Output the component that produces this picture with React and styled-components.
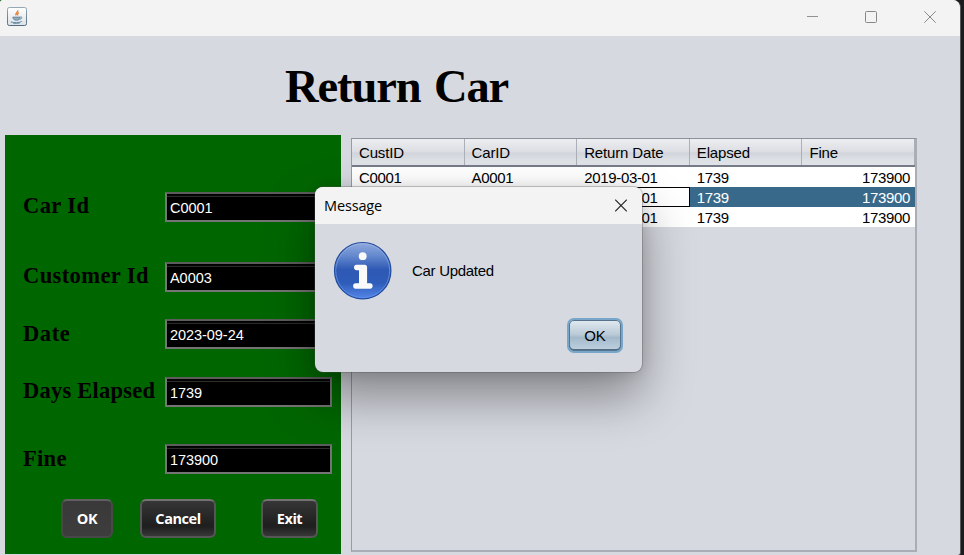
import React from "react";
import styled, { createGlobalStyle } from "styled-components";

const Global = createGlobalStyle`
  * { box-sizing: border-box; }
  body { margin: 0; background: #1b1c1d; overflow: hidden; }
`;

const Desktop = styled.div`
  position: relative;
  width: 964px;
  height: 555px;
  overflow: hidden;
  background: linear-gradient(90deg, #0b5a12 0 20px, #1a1b1c 20px);
  font: 15px/20px "Liberation Sans", Arial, sans-serif;
  color: #000;
`;

const Window = styled.div`
  width: 961px;
  height: 555px;
  display: flex;
  flex-direction: column;
  background: #d6d9e0;
  border-right: 1px solid #55585b;
  border-radius: 3px 8px 3px 0;
  overflow: hidden;
`;

const TitleBar = styled.header`
  flex: 0 0 36px;
  display: flex;
  align-items: center;
  justify-content: space-between;
  padding: 0 24px 3px 7px;
  background: #f3f3f3;
`;

const Controls = styled.div`
  display: flex;
  gap: 47px;
  svg { display: block; }
`;

const Heading = styled.h1`
  flex: 0 0 99px;
  margin: 0;
  padding: 23px 0 0 285px;
  font: bold 46.5px/55px "Liberation Serif", "Times New Roman", serif;
  letter-spacing: -1.1px;
  word-spacing: 3px;
  white-space: nowrap;
`;

const Content = styled.main`
  display: flex;
  align-items: flex-start;
  gap: 10px;
  padding-left: 5px;
`;

const FormPanel = styled.div`
  width: 336px;
  height: 419px;
  padding: 57px 9px 0 18px;
  background: #006600;
`;

const FieldRow = styled.div`
  display: grid;
  grid-template-columns: 142px 167px;
  height: 30px;
  margin-bottom: ${(p) => p.$gap}px;
`;

const Label = styled.label`
  font: bold 22.5px/${(p) => p.$line || 28}px "Liberation Serif", "Times New Roman", serif;
  letter-spacing: ${(p) => p.$spacing}px;
  white-space: nowrap;
`;

const Field = styled.div`
  height: 30px;
  padding: 4px 3px 0;
  color: #fff;
  font-size: 14.5px;
  line-height: 20px;
  letter-spacing: -0.05px;
  background: linear-gradient(#000 0 1px, #050505 1px 2px, #2b2b2b 2px 3px, #000 3px);
  border: 2px solid #747474;
  border-top-color: #5d5d5d;
  border-left-color: #777;
`;

const Actions = styled.div`
  display: flex;
  padding: 0 0 0 38px;
`;

const DarkButton = styled.button`
  width: ${(p) => p.$width}px;
  height: 39px;
  margin: 0 ${(p) => p.$after || 0}px 0 0;
  padding: 0;
  color: #fff;
  font: bold 14.5px/20px "Open Sans", "Noto Sans", sans-serif;
  letter-spacing: -0.45px;
  border: 2px solid ${(p) => (p.$pressed ? "#484848" : "#565656")};
  border-top-color: ${(p) => (p.$pressed ? "#606060" : "#737373")};
  border-radius: 6px;
  background: ${(p) =>
    p.$pressed
      ? "linear-gradient(#393939, #3d3d3d)"
      : "linear-gradient(#363636, #1f1f1f 68%, #202020 75%, #383838)"};
`;

const ScrollPane = styled.section`
  width: 566px;
  height: 414px;
  margin-top: 3px;
  border: 2px solid #a9adb5;
  border-width: 1px 2px 2px 1px;
  border-top-color: #8d919b;
  border-left-color: #989ca5;
`;

const Table = styled.div`
  width: 563px;
`;

const Row = styled.div`
  display: grid;
  grid-template-columns: repeat(5, 112.6px);
  height: 20px;
  background: #fff;
`;

const HeaderRow = styled(Row)`
  height: 28px;
  border-bottom: 2px solid #757c88;
  background: linear-gradient(#eceef1, #dcdee3 48%, #d1d4da 54%, #dde0e5 80%, #dfe2e7);
`;

const HeaderCell = styled.div`
  padding: 4px 0 0 7px;
  line-height: 20px;
  letter-spacing: -0.15px;
  border-right: 1px solid #abafb8;
  white-space: nowrap;
`;

const Cell = styled.div`
  height: 20px;
  padding: 1px 5px 0 7px;
  line-height: 19px;
  letter-spacing: -0.33px;
  text-align: ${(p) => (p.$right ? "right" : "left")};
  color: ${(p) => (p.$selected && !p.$focused ? "#fff" : "#000")};
  background: ${(p) => (p.$selected && !p.$focused ? "#39698a" : "#fff")};
  box-shadow: ${(p) => (p.$focused ? "inset 0 0 0 1px #000" : "none")};
  white-space: nowrap;
`;

const Dialog = styled.div`
  position: absolute;
  left: 315px;
  top: 187px;
  width: 327px;
  height: 185px;
  display: flex;
  flex-direction: column;
  border-radius: 8px;
  overflow: hidden;
  background: #d6d9e0;
  box-shadow: 0 0 0 1px rgba(80, 80, 80, 0.3), 0 24px 50px rgba(0, 0, 0, 0.4), 0 1px 14px rgba(0, 0, 0, 0.12);
`;

const DialogBar = styled.div`
  flex: 0 0 37px;
  display: flex;
  justify-content: space-between;
  align-items: center;
  padding: 0 15px 0 9px;
  background: #f3f3f3;
  font: 14.5px/20px "Open Sans", "Noto Sans", sans-serif;
  letter-spacing: -0.15px;
`;

const DialogBody = styled.div`
  display: flex;
  align-items: center;
  gap: 19px;
  height: 59px;
  margin: 17px 0 0 18px;
  letter-spacing: -0.3px;
`;

const DialogFooter = styled.div`
  display: flex;
  justify-content: flex-end;
  padding: 18px 19px 0 0;
`;

const OkButton = styled.button`
  width: 56px;
  height: 35px;
  padding: 1px 0 0;
  border: 2px solid #78a6ca;
  border-radius: 7px;
  background: linear-gradient(#e2eaf0, #b8c9d6 48%, #a3b9ca 56%, #bfd2e2);
  box-shadow: inset 0 0 0 1px #58748c, inset 0 -1px 0 1px #536d82;
  font: 15px/20px "Liberation Sans", Arial, sans-serif;
  color: #000;
`;

const JavaIcon = () => (
  <svg width="20" height="20" viewBox="0 0 20 20" fill="none">
    <defs>
      <linearGradient id="tile" x2="0" y2="1">
        <stop stopColor="#fff" />
        <stop offset="1" stopColor="#dce2e7" />
      </linearGradient>
      <linearGradient id="tileEdge" x2="0" y2="1">
        <stop stopColor="#97a7b3" />
        <stop offset="1" stopColor="#536c7f" />
      </linearGradient>
    </defs>
    <rect x=".5" y=".5" width="19" height="18" rx="1.8" fill="url(#tile)" stroke="url(#tileEdge)" />
    <path d="M10.6 3.3c1.2 1.7-3 2.7-1.6 5m3-2.7c-2.2.9-1.8 1.6-1.2 2.9" stroke="#e88a45" strokeWidth="1.5" />
    <path d="M5.8 10.1h7.4c0 2.1-1.4 3.2-3.7 3.2s-3.5-1.1-3.7-3.2Z" fill="#91a9b9" stroke="#5d8099" strokeWidth=".8" />
    <path d="M13.5 9.8c2.2-.2 1.5 2.3-.9 2.5M3.8 14.9c2.7 1.2 9 .9 11-.5M6 16.1c2 .4 5 .3 6.8-.1" stroke="#6589a2" />
  </svg>
);

const InfoIcon = () => (
  <svg width="60" height="60" viewBox="0 0 60 60">
    <defs>
      <linearGradient id="info" x2="0" y2="1">
        <stop stopColor="#91aadd" />
        <stop offset=".24" stopColor="#6488ce" />
        <stop offset=".48" stopColor="#2e59b4" />
        <stop offset=".72" stopColor="#2e5cb9" />
        <stop offset="1" stopColor="#5586e8" />
      </linearGradient>
      <linearGradient id="rim" x2="0" y2="1">
        <stop stopColor="#a5bae4" />
        <stop offset="1" stopColor="#6794eb" />
      </linearGradient>
    </defs>
    <circle cx="29.7" cy="29.7" r="28.2" fill="url(#info)" stroke="#204b9d" strokeWidth="1.2" />
    <circle cx="29.7" cy="29.7" r="27" fill="none" stroke="url(#rim)" opacity=".6" />
    <circle cx="29.7" cy="15.2" r="3.9" fill="#fafafa" />
    <path d="M23.5 23.8h8.2c1.5 0 2.4 1 2.4 2.4v16.1h3.1c3.3 0 3.3 5.4 0 5.4H22.6c-3.3 0-3.3-5.4 0-5.4h3.4V29.2h-2.5c-3.3 0-3.3-5.4 0-5.4Z" fill="#fafafa" />
  </svg>
);

const fields = [
  { label: "Car Id", value: "C0001", gap: 40, spacing: 0.4 },
  { label: "Customer Id", value: "A0003", gap: 27, spacing: 0.4 },
  { label: "Date", value: "2023-09-24", gap: 28, spacing: 0.6, line: 30 },
  { label: "Days Elapsed", value: "1739", gap: 37, spacing: 0.23 },
  { label: "Fine", value: "173900", gap: 25, spacing: 0.3, line: 30 },
];

const rows = [
  ["C0001", "A0001", "2019-03-01", "1739", "173900"],
  ["C0001", "A0002", "2019-03-01", "1739", "173900"],
  ["C0001", "A0003", "2019-03-01", "1739", "173900"],
];

export default function App() {
  return (
    <Desktop>
      <Global />
      <Window>
        <TitleBar>
          <JavaIcon />
          <Controls>
            <svg width="12" height="14" viewBox="0 0 12 14" stroke="#929292"><path d="M1 6.5h12" /></svg>
            <svg width="12" height="14" viewBox="0 0 12 14" fill="none" stroke="#888"><rect x=".5" y="1.5" width="11" height="11" rx="1" /></svg>
            <svg width="12" height="14" viewBox="0 0 12 14" stroke="#888"><path d="M.3 1.3l11.4 11.4M11.7 1.3.3 12.7" /></svg>
          </Controls>
        </TitleBar>
        <Heading>Return Car</Heading>
        <Content>
          <FormPanel>
            {fields.map((f) => (
              <FieldRow key={f.label} $gap={f.gap}>
                <Label $spacing={f.spacing} $line={f.line}>{f.label}</Label>
                <Field>{f.value}</Field>
              </FieldRow>
            ))}
            <Actions>
              <DarkButton $width={52} $after={27} $pressed>OK</DarkButton>
              <DarkButton $width={76} $after={45}>Cancel</DarkButton>
              <DarkButton $width={57}>Exit</DarkButton>
            </Actions>
          </FormPanel>
          <ScrollPane>
            <Table>
              <HeaderRow>
                {["CustID", "CarID", "Return Date", "Elapsed", "Fine"].map((h) => (
                  <HeaderCell key={h}>{h}</HeaderCell>
                ))}
              </HeaderRow>
              {rows.map((row, r) => (
                <Row key={r}>
                  {row.map((value, c) => (
                    <Cell key={c} $right={c === 4} $selected={r === 1} $focused={r === 1 && c === 2}>
                      {value}
                    </Cell>
                  ))}
                </Row>
              ))}
            </Table>
          </ScrollPane>
        </Content>
      </Window>
      <Dialog role="dialog">
        <DialogBar>
          <span>Message</span>
          <svg width="12" height="14" viewBox="0 0 12 14" stroke="#222" strokeWidth="1.1"><path d="M.2.7l11.6 11.6M11.8.7.2 12.3" /></svg>
        </DialogBar>
        <DialogBody>
          <InfoIcon />
          <span>Car Updated</span>
        </DialogBody>
        <DialogFooter>
          <OkButton>OK</OkButton>
        </DialogFooter>
      </Dialog>
    </Desktop>
  );
}
